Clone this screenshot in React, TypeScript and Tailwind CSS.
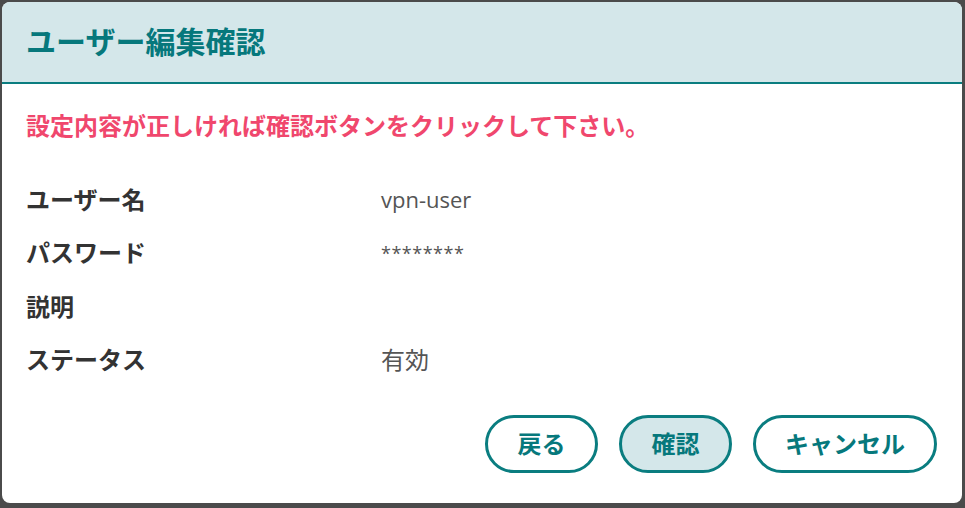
// User edit confirmation dialog
// Confirm screen shown before saving VPN user changes

const rows: { label: string; value: string; valueClass: string }[] = [
  { label: 'ユーザー名', value: 'vpn-user', valueClass: 'text-[22px]' },
  { label: 'パスワード', value: '********', valueClass: 'text-[18px] tracking-[0.5px]' },
  { label: '説明', value: '', valueClass: 'text-[22px]' },
  { label: 'ステータス', value: '有効', valueClass: 'text-[24px]' },
];

export default function App() {
  return (
    <div
      className="h-[508px] w-[965px] bg-[#4b4b4b] p-[2px] pr-[3px] pb-[5px]"
      style={{ fontFamily: '"Open Sans", "Noto Sans CJK JP", sans-serif' }}
    >
      <div className="flex h-full flex-col overflow-hidden rounded-[8px] bg-white">
        {/* Header */}
        <div className="flex h-[82px] shrink-0 items-center border-b-2 border-[#0a7d80] bg-[#d4e7ea] pl-[24px]">
          <h1 className="text-[30px] font-bold leading-none text-[#06787c]">ユーザー編集確認</h1>
        </div>

        {/* Body */}
        <div className="pl-[24px]">
          <p className="mt-[26px] text-[24px] font-bold leading-[32px] text-[#f0476d]">
            設定内容が正しければ確認ボタンをクリックして下さい。
          </p>

          <div className="mt-[31px] grid grid-cols-[355px_1fr] auto-rows-[53.5px]">
            {rows.map((row) => (
              <div key={row.label} className="contents">
                <div className="flex items-center text-[24px] font-bold text-[#333333]">{row.label}</div>
                <div className={`flex items-center text-[#555555] ${row.valueClass}`}>{row.value}</div>
              </div>
            ))}
          </div>
        </div>

        {/* Footer */}
        <div className="mt-auto flex justify-end gap-[21px] pb-[30px] pr-[25px]">
          <button className="h-[58px] w-[113px] rounded-full border-[3px] border-[#0a7d80] bg-white text-[24px] font-bold text-[#06787c]">
            戻る
          </button>
          <button className="h-[58px] w-[113px] rounded-full border-[3px] border-[#0a7d80] bg-[#d4e7ea] text-[24px] font-bold text-[#06787c]">
            確認
          </button>
          <button className="h-[58px] w-[184px] rounded-full border-[3px] border-[#0a7d80] bg-white text-[24px] font-bold text-[#06787c]">
            キャンセル
          </button>
        </div>
      </div>
    </div>
  );
}
